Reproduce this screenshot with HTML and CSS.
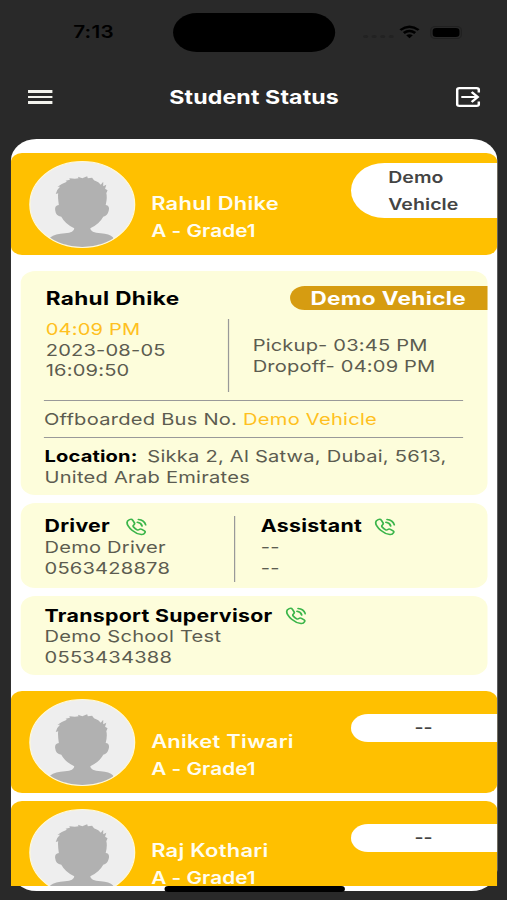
FILE: index.html
```html
<!DOCTYPE html>
<html lang="en">
<head>
<meta charset="utf-8">
<title>Student Status</title>
<link rel="stylesheet" href="styles.css">
</head>
<body>
<svg class="defs" aria-hidden="true">
  <symbol id="person" viewBox="0 0 84 84">
    <path d="M16 74.500Q20 71 28 70.500Q35.500 70 35.500 65.500Q28 61 25 54Q20.500 53.500 20 47.500Q19.500 43 23 42.500Q22 34 22.500 31L20.500 31.500Q21.500 27 24 24.500L22 24.500Q26 21 29.500 19.500L28.500 18.500L32 17.500L31.500 16L36 16.500L39 16L38.500 14.500L42 16L46 14L46.500 16L50 15.500L51.500 18L55 20L57 22.500L59 19.500L59 24L61.500 22.500L60.500 26.500L62.500 28L61.500 31Q62.500 35 61 42.500Q64.500 43 63.500 48Q62.500 53.500 59 54Q56 61 48.500 65.500Q48.500 70 57 70.500Q64 71 67 74.500V84H16Z" fill="#b1b1b1"/>
  </symbol>
  <symbol id="call" viewBox="0 0 24 24">
    <path d="M8.200 2.800 10 6.300Q10.700 7.900 9.300 9.200Q8 10.500 9 12Q10.800 14.600 13 16Q14.200 16.700 15.400 15.500Q16.700 14.400 18.300 15.300L21.300 17.200Q22.600 18 21.800 19.800Q20.500 22.700 17.800 22.400Q12.400 21.700 7.300 16.500Q1.700 10.600 1.700 5.900Q1.700 3.400 4.500 1.900Q7 .800 8.200 2.800ZM14.500 1.600Q21 2.300 22.700 9M13.300 5.600Q17.500 6.300 18.600 10.600" fill="none" stroke="#3bb54a" stroke-width="2" stroke-linecap="round" stroke-linejoin="round"/>
  </symbol>
</svg>
<div class="screen">
  <div class="status-bar">
    <span class="clock">7:13</span>
    <span class="island"></span>
    <span class="signal"><i></i><i></i><i></i><i></i></span>
    <svg class="wifi" viewBox="0 0 18 14"><path d="M1.500 5Q9-1.500 16.500 5M4.300 8Q9 4 13.700 8" fill="none" stroke="#000" stroke-width="2.300"/><path d="M6.300 10.300Q9 8 11.700 10.300L9 13.200Z"/></svg>
    <span class="battery"><i></i></span>
  </div>
  <header class="app-bar">
    <span class="menu"><i></i><i></i><i></i></span>
    <h1>Student Status</h1>
    <svg class="logout" viewBox="0 0 20 20"><path d="M18.900 5.500V3Q18.900 1.100 17 1.100H3Q1.100 1.100 1.100 3V17Q1.100 18.900 3 18.900H17Q18.900 18.900 18.900 17V14.500M4.500 10H17.500M13 5 18 10 13 15" fill="none" stroke="#fff" stroke-width="2.100"/></svg>
  </header>
  <main class="panel">
    <div class="list">
      <section class="student">
        <svg class="avatar"><use href="#person"/></svg>
        <div class="who"><b>Rahul Dhike</b><span>A - Grade1</span></div>
        <div class="tag tall">Demo<br>Vehicle</div>
      </section>
      <div class="details">
        <section class="card trip">
          <div class="trip-head"><h2>Rahul Dhike</h2><span class="badge">Demo Vehicle</span></div>
          <div class="times">
            <div class="stamp"><span class="amber">04:09 PM</span><br>2023-08-05<br>16:09:50</div>
            <div class="plan">Pickup- 03:45 PM<br>Dropoff- 04:09 PM</div>
          </div>
          <p class="bus">Offboarded Bus No. <span class="amber">Demo Vehicle</span></p>
          <p class="place"><b>Location:</b><span class="address">Sikka 2, Al Satwa, Dubai, 5613,</span><br>United Arab Emirates</p>
        </section>
        <section class="card crew">
          <div class="driver"><h3>Driver<svg class="call"><use href="#call"/></svg></h3>Demo Driver<br>0563428878</div>
          <div class="assistant"><h3>Assistant<svg class="call"><use href="#call"/></svg></h3>--<br>--</div>
        </section>
        <section class="card supervisor">
          <h3>Transport Supervisor<svg class="call"><use href="#call"/></svg></h3>Demo School Test<br>0553434388
        </section>
      </div>
      <section class="student">
        <svg class="avatar"><use href="#person"/></svg>
        <div class="who"><b>Aniket Tiwari</b><span>A - Grade1</span></div>
        <div class="tag">--</div>
      </section>
      <section class="student last">
        <svg class="avatar"><use href="#person"/></svg>
        <div class="who"><b>Raj Kothari</b><span>A - Grade1</span></div>
        <div class="tag">--</div>
      </section>
    </div>
  </main>
  <div class="home"></div>
</div>
</body>
</html>
```
FILE: styles.css
```css
* { box-sizing: border-box; margin: 0; padding: 0; }
html, body { height: 900px; overflow: hidden; background: #292929; }
body { font: 16.5px/20.7px Inter, "Liberation Sans", sans-serif; letter-spacing: .2px; color: #5c5c50; }
.defs { display: none; }
.screen { position: relative; width: 416px; height: 900px; transform: scaleX(1.21875); transform-origin: 0 0; background: #292929; }
.status-bar { display: flex; align-items: center; height: 64px; }
.clock { width: 82px; margin-left: 60px; font-size: 17px; font-weight: 600; color: #000; }
.island { width: 133px; height: 39px; border-radius: 20px; background: #000; }
.signal { display: flex; gap: 3px; margin: 9px 0 0 23px; width: 29px; }
.signal i { width: 4px; height: 3px; border-radius: 2px; background: #222; }
.wifi { width: 18px; height: 14px; }
.battery { display: flex; width: 26px; height: 13px; margin-left: 8px; padding: 1px; border: 1px solid #202020; border-radius: 4px; }
.battery i { flex: 1; border-radius: 3px; background: #000; }
.app-bar { display: flex; align-items: center; justify-content: space-between; height: 66px; padding: 0 21.500px 0 23px; color: #fff; }
.app-bar h1 { padding-top: 2px; font-size: 19px; font-weight: 700; letter-spacing: .1px; }
.menu { display: grid; gap: 3.300px; width: 19.500px; }
.menu i { height: 2.200px; background: #f3f3ee; }
.logout { width: 20px; height: 20px; }
.panel { width: 398.500px; height: 752px; margin: 9px 0 0 9px; padding-top: 14px; border-radius: 21px; background: #fff; }
.list { height: 732.500px; overflow: hidden; }
.student { display: flex; height: 102px; margin-bottom: 8px; border-radius: 9px; background: #ffc000; color: #fffdf0; }
.avatar { flex: none; width: 87px; height: 87px; margin: 8px 0 0 14.500px; border: 1.500px solid #fff9d8; border-radius: 50%; background: #eee; }
.who { display: flex; flex: none; flex-direction: column; width: 177px; padding: 37px 0 0 13.500px; line-height: 27.500px; font-weight: 600; font-size: 17px; letter-spacing: .05px; }
.who b { font-size: 18px; font-weight: 600; letter-spacing: .22px; }
.last .who { padding-top: 36px; }
.tag { flex: none; width: 120px; height: 27.500px; margin-top: 23px; border-radius: 14px 0 0 14px; background: #fff; color: #444; font-size: 16px; font-weight: 600; line-height: 27.500px; text-align: center; letter-spacing: 0; }
.tag.tall { height: 55px; margin-top: 10px; padding: .500px 0 0 31px; border-radius: 27.500px 0 0 27.500px; text-align: left; letter-spacing: .07px; }
.details { display: grid; gap: 8px; padding: 8px 8px 16.500px; }
.card { border-radius: 12px; background: #fdfddb; }
.trip { height: 224px; }
.trip-head { display: flex; align-items: center; justify-content: space-between; height: 24px; margin-top: 15px; padding-left: 20.500px; }
h2, h3, .place b { color: #000; font-weight: 700; }
h2, .badge { font-size: 18.500px; letter-spacing: .3px; }
.badge { width: 162px; height: 23.500px; padding-left: 17.200px; border-radius: 12px 0 0 12px; background: #d69c11; color: #fff; font-weight: 700; line-height: 24px; }
.amber { color: #ffc020; }
.times { display: flex; height: 73px; margin: 9px 20px 0 20.500px; }
.stamp { width: 150.500px; border-right: 1px solid #999; letter-spacing: .15px; }
.plan { padding: 16px 0 0 19.300px; letter-spacing: .14px; }
.bus { height: 38px; margin: 8px 19.500px 0 19px; border: solid #999; border-width: 1px 0; line-height: 36.500px; }
.place { padding: 8px 0 0 19.500px; }
.place b { letter-spacing: .12px; }
.address { margin-left: 8px; letter-spacing: .18px; }
.crew { display: flex; height: 85px; padding: 13px 0 6px 19.500px; }
.driver { width: 156px; border-right: 1px solid #999; letter-spacing: .17px; }
.assistant { padding-left: 21.500px; }
.supervisor { height: 78.500px; padding: 9.500px 0 0 19.500px; }
h3 { display: flex; align-items: center; height: 20.800px; font-size: 17.500px; letter-spacing: .24px; }
.call { width: 17.500px; height: 18px; margin: 1px 0 0 10px; }
.driver .call { margin-left: 13px; }
.home { position: absolute; left: 134.500px; top: 886px; width: 148px; height: 6px; border-radius: 3px; background: #000; }
```
